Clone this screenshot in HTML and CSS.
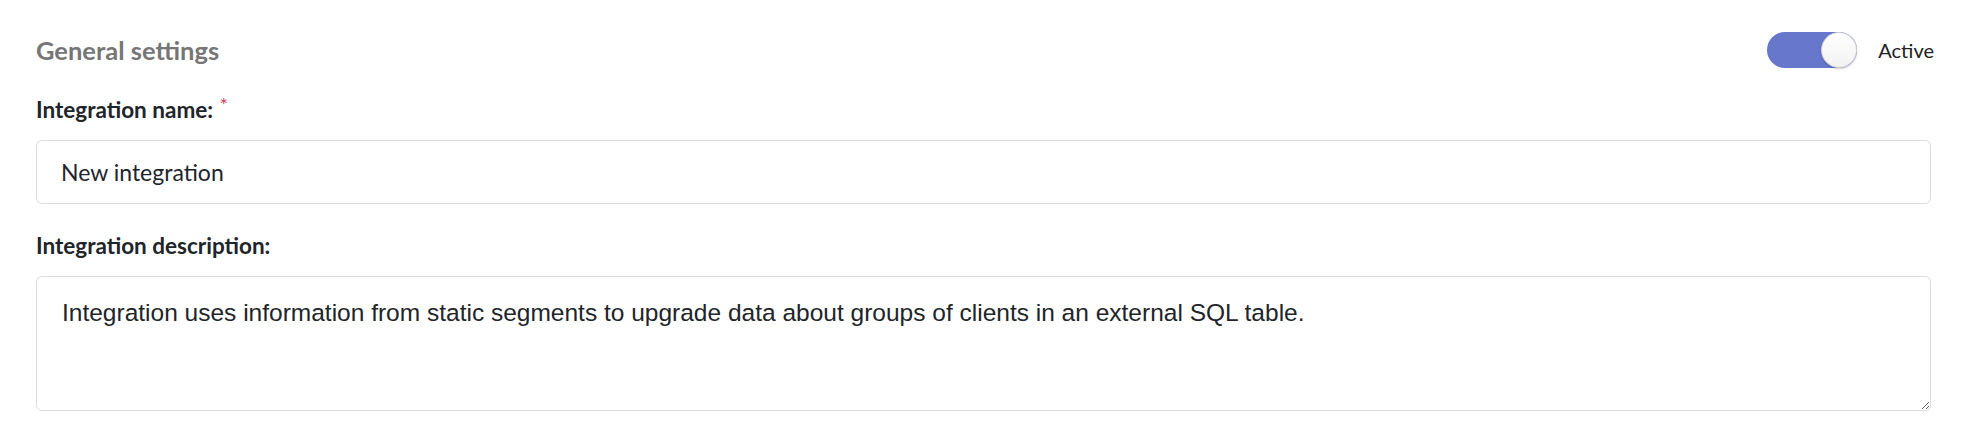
FILE: index.html
```html
<!DOCTYPE html>
<html lang="en">

<head>
    <meta charset="UTF-8">
    <meta name="viewport" content="width=device-width, initial-scale=1.0">
    <title>General settings</title>
    <link rel="stylesheet" href="styles.css">
</head>

<body>
    <div class="panel">
        <div class="panelHead">
            <h2 class="panel-title">General settings</h2>
            <label class="switch">
                <input type="checkbox" id="active" checked>
                <span class="slider"></span>
                <span class="switch-text">Active</span>
            </label>
        </div>
        <div class="field">
            <label class="field-label" for="name">Integration name: <span class="required">*</span></label>
            <input type="text" id="name" class="text-input" value="New integration">
        </div>
        <div class="field">
            <label class="field-label" for="description">Integration description:</label>
            <textarea id="description" class="text-area">Integration uses information from static segments to upgrade data about groups of clients in an external SQL table.</textarea>
        </div>
    </div>
</body>

</html>
```

FILE: styles.css
```css
body {
    margin: 0;
    font-family: Lato, "Noto Sans", sans-serif;
    background-color: #fff;
    color: #212529;
}

.panel {
    padding: 32px 36px 0;
}

.panelHead {
    display: flex;
    justify-content: space-between;
    align-items: center;
    height: 36px;
}

.panel-title {
    margin: 0;
    font-size: 25.5px;
    font-weight: 700;
    color: #767676;
}

.switch {
    display: flex;
    align-items: center;
    gap: 21px;
    margin-right: -3px;
    cursor: pointer;
}

.switch input {
    display: none;
}

.slider {
    position: relative;
    width: 90px;
    height: 36px;
    border-radius: 18px;
    background-color: #ccc;
}

.switch input:checked + .slider {
    background-color: #6677cc;
}

.slider::after {
    content: "";
    position: absolute;
    top: 0;
    left: 0;
    width: 34px;
    height: 34px;
    border-radius: 50%;
    background: linear-gradient(#fff, #f2f2f2);
    border: 1px solid #d6d6d6;
    box-shadow: 0 1px 2px rgba(0, 0, 0, 0.2);
}

.switch input:checked + .slider::after {
    left: 54px;
}

.switch-text {
    font-size: 20px;
    color: #222;
}

.field {
    margin-top: 28px;
}

.field-label {
    display: block;
    margin-bottom: 16px;
    font-size: 22.5px;
    line-height: 1.25;
    font-weight: 700;
    color: #212529;
}

.required {
    position: relative;
    top: -6px;
    margin-left: 1px;
    font-size: 20px;
    font-weight: 400;
    color: #d0455a;
}

.text-input,
.text-area {
    display: block;
    width: 100%;
    box-sizing: border-box;
    border: 1px solid #dcdcdc;
    border-radius: 6px;
    color: #212529;
    background-color: #fff;
}

.text-input {
    height: 64px;
    padding: 0 24px;
    font-family: Lato, "Noto Sans", sans-serif;
    font-size: 23px;
}

.text-area {
    height: 135px;
    padding: 22px 25px;
    font-family: "Liberation Sans", Arial, sans-serif;
    font-size: 24.5px;
    resize: vertical;
}
```
